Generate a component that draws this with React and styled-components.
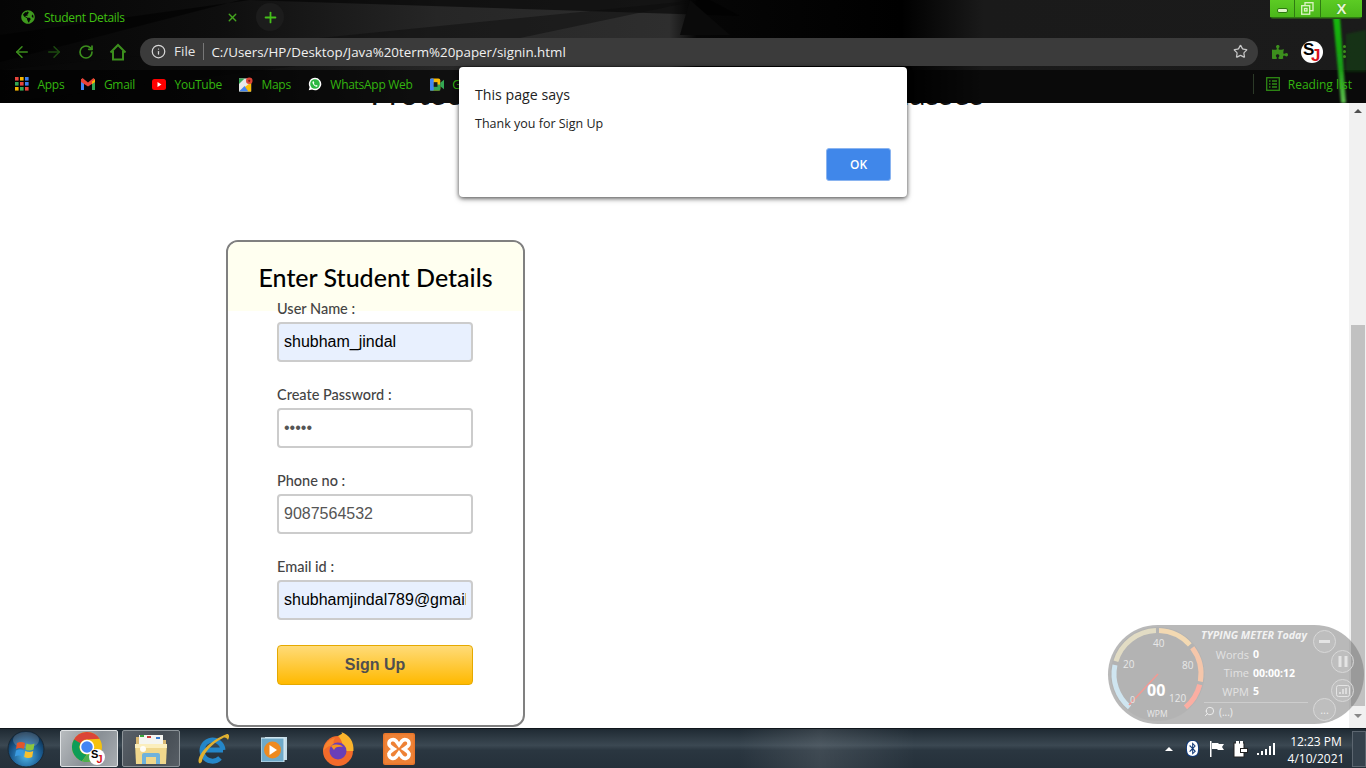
import React from 'react'
import styled, { createGlobalStyle } from 'styled-components'
import { ArrowLeft, ArrowRight, RotateCw, Info, Star, Plus, X, Search } from 'lucide-react'
import { FaGlobeAmericas, FaPuzzlePiece, FaBluetooth } from 'react-icons/fa'

const Global = createGlobalStyle`
  html, body { margin: 0; padding: 0; overflow: hidden; background: #fff; }
  * { box-sizing: border-box; }
`

const uiFont = `"Open Sans", "Noto Sans", sans-serif`
const pageFont = `Lato, "Noto Sans", sans-serif`

/* small drawings */
const HomeIcon = () => (
  <svg width="18" height="18" viewBox="0 0 18 18" fill="none" stroke="#3c8f1d" strokeWidth="2">
    <path d="M1.5 9.5 9 2l7.500 7.500M4 8v8.500h10V8" />
  </svg>
)

const AppsIcon = () => (
  <svg width="14" height="14" viewBox="0 0 14 14">
    {['#e8453c', '#f4b400', '#3d7ff0', '#34a853', '#e8453c', '#3d7ff0', '#f4b400', '#34a853', '#e8453c'].map((c, i) => (
      <rect key={i} x={(i % 3) * 5} y={Math.floor(i / 3) * 5} width="3.600" height="3.600" fill={c} />
    ))}
  </svg>
)

const GmailIcon = () => (
  <svg width="14" height="12" viewBox="0 0 14 12">
    <rect x="0" y="1" width="3" height="11" fill="#4285f4" />
    <rect x="11" y="1" width="3" height="11" fill="#34a853" />
    <path d="M0 1.500 1.500 0 7 4.500 12.500 0 14 1.500V4L7 8.500 0 4Z" fill="#ea4335" />
    <path d="M11 3.500 14 1.500V4L11 6Z" fill="#fbbc04" />
  </svg>
)

const YoutubeIcon = () => (
  <svg width="14" height="11" viewBox="0 0 14 11">
    <rect width="14" height="11" rx="2.500" fill="#f00" />
    <path d="M5.500 3 9.500 5.500 5.500 8Z" fill="#fff" />
  </svg>
)

const MapsIcon = () => (
  <svg width="15" height="15" viewBox="0 0 15 15">
    <rect y="1" width="13" height="14" fill="#e8e8e8" />
    <path d="M0 15 13 5v10Z" fill="#fbbc04" />
    <path d="M0 1h6L0 7Z" fill="#34a853" />
    <path d="M0 15 6 9l4 6Z" fill="#4285f4" />
    <circle cx="11" cy="3.500" r="3.500" fill="#db4437" />
    <circle cx="11" cy="3.500" r="1.200" fill="#7c1d16" />
  </svg>
)

const WhatsappIcon = () => (
  <svg width="18" height="18" viewBox="0 0 18 18">
    <path d="M9 1a8 8 0 1 1-3.800 15L1 17l1.100-4A8 8 0 0 1 9 1Z" fill="#fff" />
    <circle cx="9" cy="9" r="6.200" fill="#2bb741" />
    <path d="M6.500 5.500c-1 .8-1 2 0 3.600 1 1.700 2.300 2.900 4 3.300 1 .2 1.800-.3 2-1.200l-1.800-1-.8.800c-1-.4-2-1.500-2.400-2.500l.7-.8-.9-2.200Z" fill="#fff" />
  </svg>
)

const MeetIcon = () => (
  <svg width="15" height="13" viewBox="0 0 15 13">
    <rect width="11" height="13" rx="2" fill="#fbbc04" />
    <rect y="6.500" width="11" height="6.500" rx="1" fill="#34a853" />
    <rect width="4" height="13" rx="1" fill="#4285f4" />
    <rect x="4" y="4" width="4" height="5" fill="#1c1c1c" />
    <path d="M11 4.500 15 1.500v10L11 8.500Z" fill="#34a853" />
  </svg>
)

const ReadingIcon = () => (
  <svg width="14" height="14" viewBox="0 0 14 14" fill="none" stroke="#2f8a14" strokeWidth="1.300">
    <rect x="0.700" y="0.700" width="12.600" height="12.600" />
    <path d="M3 4h1.500M6 4h5M3 7h1.500M6 7h5M3 10h1.500M6 10h5" />
  </svg>
)

const SjBadge = ({ size }) => (
  <svg width={size} height={size} viewBox="0 0 22 22">
    <circle cx="11" cy="11" r="11" fill="#fff" />
    <text x="2" y="14" fontFamily="Liberation Sans" fontWeight="700" fontSize="17" fill="#000">S</text>
    <text x="10" y="20" fontFamily="Liberation Sans" fontWeight="700" fontSize="17" fill="#d8161c">J</text>
  </svg>
)

const WindowsOrb = () => (
  <svg width="38" height="38" viewBox="0 0 38 38">
    <defs>
      <radialGradient id="orb" cx="50%" cy="70%" r="65%">
        <stop offset="0" stopColor="#4fb4e6" />
        <stop offset="0.6" stopColor="#1c5f96" />
        <stop offset="1" stopColor="#0b2c4a" />
      </radialGradient>
    </defs>
    <circle cx="19" cy="19" r="18" fill="url(#orb)" stroke="#1b2833" />
    <ellipse cx="19" cy="10" rx="13" ry="8" fill="#fff" opacity="0.18" />
    <path d="M10 13q4-2 8 0l-1 6q-4-2-8 0Z" fill="#e2562b" />
    <path d="M19.500 13.500q4 2 8 0l-1 6q-4 2-8 0Z" fill="#8cc63e" />
    <path d="M9 20.500q4-2 7.800 0l-1 6q-4-2-8 0Z" fill="#3a9ae0" />
    <path d="M18.200 21q4 2 8 0l-1 6q-4 2-8 0Z" fill="#f8c02d" />
  </svg>
)

const ChromeIcon = () => (
  <svg width="36" height="36" viewBox="0 0 36 36">
    <circle cx="16" cy="16" r="15" fill="#f4c20d" />
    <path d="M16 1A15 15 0 0 1 29 8.500H16a7.500 7.500 0 0 0-6.500 3.750L3 8.500A15 15 0 0 1 16 1Z" fill="#db4437" transform="rotate(-3 16 16)" />
    <path d="M3 8.500A15 15 0 0 0 11 30.200L16 23.500a7.500 7.500 0 0 1-6.500-11.250Z" fill="#0f9d58" />
    <path d="M11 30.200 16 23.500a7.500 7.500 0 0 0 6.500-4L29 23.500A15 15 0 0 1 11 30.200Z" fill="#4caf50" />
    <circle cx="16" cy="16" r="6.500" fill="#4285f4" stroke="#fff" strokeWidth="1.500" />
    <circle cx="26" cy="26" r="8" fill="#fff" />
    <text x="20" y="27" fontFamily="Liberation Sans" fontWeight="700" fontSize="11" fill="#000">S</text>
    <text x="25.500" y="32" fontFamily="Liberation Sans" fontWeight="700" fontSize="11" fill="#d8161c">J</text>
  </svg>
)

const FolderIcon = () => (
  <svg width="34" height="34" viewBox="0 0 34 34">
    <path d="M2 5h10l2 3h18v6H2Z" fill="#d9b871" />
    <rect x="5" y="3" width="24" height="9" fill="#f5f5f0" />
    <rect x="6" y="3" width="4" height="2" fill="#3ba53b" />
    <rect x="13" y="4" width="4" height="2" fill="#cc3b3b" />
    <rect x="22" y="5" width="4" height="2" fill="#3b7fd0" />
    <path d="M1 12h32l-1 20H2Z" fill="#f0d78c" />
    <path d="M1 12h32v4H1Z" fill="#fbeebd" />
    <path d="M8 32v-9q0-2 2-2h14q2 0 2 2v9h-4v-7H12v7Z" fill="#6fb2dc" />
    <circle cx="9" cy="17" r="3" fill="#fff" opacity="0.9" />
  </svg>
)

const IeIcon = () => (
  <svg width="34" height="34" viewBox="0 0 34 34">
    <path d="M27 18H8M27 18A10.500 10.500 0 1 0 24 26" fill="none" stroke="#2486c8" strokeWidth="5" />
    <path d="M3 31C0 24 14 8 31 2c2 0 3 2 1 6-1-2-3-3-5-2C16 11 7 22 6 29c0 1-2 3-3 2Z" fill="#e0b030" />
  </svg>
)

const WmpIcon = () => (
  <svg width="26" height="26" viewBox="0 0 26 26">
    <rect x="4" y="1" width="22" height="23" fill="#c5dce8" />
    <rect x="0" y="2" width="23" height="24" fill="#6faac9" stroke="#d9ebf4" />
    <circle cx="11.500" cy="14" r="8.500" fill="#ee8a1f" />
    <path d="M8.500 9 16 14l-7.500 5Z" fill="#fff" />
  </svg>
)

const FirefoxIcon = () => (
  <svg width="32" height="34" viewBox="0 0 32 34">
    <circle cx="16" cy="19" r="15" fill="#f36a2a" />
    <path d="M16 4C22 1 20 1 19 0c9 3 13 10 12.500 19H20C22 14 20 8 16 4Z" fill="#fbb42c" />
    <path d="M1 19C3 10 8 7 13 6c-2 3-2 6 0 7-5 0-9 2-12 6Z" fill="#f9852e" />
    <circle cx="16" cy="19" r="8.500" fill="#6a3fb8" />
    <path d="M9 14c4-2 9-2 12 1-5-1-8 0-9 3Z" fill="#f7931e" />
  </svg>
)

const XamppIcon = () => (
  <svg width="32" height="32" viewBox="0 0 32 32">
    <rect width="32" height="32" rx="2" fill="#e8762b" />
    <rect x="1.500" y="1.500" width="29" height="29" rx="1" fill="#ee8236" />
    <path d="M6 11a4 4 0 0 1 7-3l3 4 3-4a4 4 0 0 1 7 3c0 2-2 3-5 5 3 2 5 3 5 5a4 4 0 0 1-7 3l-3-4-3 4a4 4 0 0 1-7-3c0-2 2-3 5-5-3-2-5-3-5-5Z" fill="none" stroke="#fff" strokeWidth="3.600" />
  </svg>
)

const ThemeArt = () => (
  <ArtLayer viewBox="0 0 1366 103" preserveAspectRatio="none">
    <defs>
      <linearGradient id="base" x1="0" x2="1" y1="0" y2="0">
        <stop offset="0" stopColor="#050505" />
        <stop offset="0.16" stopColor="#0e0e0e" />
        <stop offset="0.32" stopColor="#262626" />
        <stop offset="0.49" stopColor="#2e2e2e" />
        <stop offset="0.51" stopColor="#060606" />
        <stop offset="0.66" stopColor="#000" />
        <stop offset="0.72" stopColor="#1a1a1a" />
        <stop offset="1" stopColor="#1b1b1b" />
      </linearGradient>
      <linearGradient id="glow" x1="0" x2="0" y1="0" y2="1">
        <stop offset="0" stopColor="#14b80c" />
        <stop offset="0.6" stopColor="#1a9c14" />
        <stop offset="1" stopColor="#5fbf50" />
      </linearGradient>
      <filter id="soft"><feGaussianBlur stdDeviation="1" /></filter>
    </defs>
    <rect width="1366" height="103" fill="url(#base)" />
    <path d="M0 62 240 0h470l30 16L250 0 0 35Z" fill="#000" opacity="0.55" />
    <path d="M0 70 700 0 520 38 0 103Z" fill="#0a0a0a" opacity="0.45" />
    <path d="M690 0 730 35 680 35Z" fill="#0a0a0a" />
    <path d="M0 70H1366V103H0Z" fill="#000" opacity="0.6" />
    <path d="M1346 34l20-4v42h-20Z" fill="#0f5f0a" opacity="0.35" filter="url(#soft)" />
    <path d="M1333 17h7l6 86h-5Z" fill="url(#glow)" filter="url(#soft)" />
  </ArtLayer>
)

const gaugePoint = (deg, r) => {
  const a = (deg * Math.PI) / 180
  return [49.5 + r * Math.cos(a), 49 + r * Math.sin(a)]
}

const gaugeArc = (from, to, r) => {
  const [x1, y1] = gaugePoint(from, r)
  const [x2, y2] = gaugePoint(to, r)
  return `M${x1} ${y1}A${r} ${r} 0 0 1 ${x2} ${y2}`
}

const GaugeDial = () => (
  <svg width="104" height="99" viewBox="0 0 104 99">
    <circle cx="49.500" cy="49" r="47" fill="#a9a9a9" opacity="0.35" />
    <path d={gaugeArc(130, 192, 43.500)} fill="none" stroke="#cfe5f0" strokeWidth="5" />
    <path d={gaugeArc(197, 268, 43.500)} fill="none" stroke="#e2dcc4" strokeWidth="5" />
    <path d={gaugeArc(272, 318, 43.500)} fill="none" stroke="#f3d9b2" strokeWidth="5" />
    <path d={gaugeArc(323, 10, 43.500)} fill="none" stroke="#f5c6aa" strokeWidth="5" />
    <path d={gaugeArc(14, 50, 43.500)} fill="none" stroke="#fbaea2" strokeWidth="5" />
    <path d="M21 80 50 49" stroke="#f29a93" strokeWidth="1.600" />
    <g fontFamily="Open Sans" fontSize="10" fill="#e8e8e8">
      <text x="15" y="43">20</text>
      <text x="45" y="22">40</text>
      <text x="74" y="44">80</text>
      <text x="22" y="78" fontSize="9">0</text>
      <text x="61" y="77">120</text>
      <text x="39" y="92" fontSize="8.500">WPM</text>
    </g>
    <text x="39" y="71" fontFamily="Open Sans" fontSize="16" fontWeight="700" fill="#fff">00</text>
  </svg>
)

/* data */
const bookmarks = [
  { name: 'Apps', icon: <AppsIcon /> },
  { name: 'Gmail', icon: <GmailIcon /> },
  { name: 'YouTube', icon: <YoutubeIcon /> },
  { name: 'Maps', icon: <MapsIcon /> },
  { name: 'WhatsApp Web', icon: <WhatsappIcon /> },
]

const fields = [
  { label: 'User Name :', value: 'shubham_jindal', filled: true, type: 'text' },
  { label: 'Create Password :', value: 'abcde', type: 'password' },
  { label: 'Phone no :', value: '9087564532', type: 'text' },
  { label: 'Email id :', value: 'shubhamjindal789@gmail.com', filled: true, type: 'text' },
]

const meterRows = [
  { label: 'Words', value: '0' },
  { label: 'Time', value: '00:00:12' },
  { label: 'WPM', value: '5' },
]

const App = () => {
  return (
    <Screen>
      <Global />
      <BrowserTop>
        <ThemeArt />
        <TabStrip>
          <Tab>
            <FaGlobeAmericas size={14} color="#3f9a1e" />
            <TabTitle>Student Details</TabTitle>
            <X size={13} color="#45a51f" strokeWidth={2.500} />
          </Tab>
          <NewTab><Plus size={17} color="#45c01a" strokeWidth={2.500} /></NewTab>
          <WindowControls>
            <WinButton $w={24}><MinGlyph /></WinButton>
            <WinButton $w={25}>
              <svg width="13" height="13" viewBox="0 0 13 13" fill="none" stroke="#dff5c8" strokeWidth="1.300">
                <rect x="4" y="0.700" width="8" height="8" />
                <rect x="0.700" y="3.700" width="8" height="8.500" fill="#52c41f" />
                <rect x="3.500" y="6.500" width="2.500" height="2.500" />
              </svg>
            </WinButton>
            <WinButton $w={41}><CloseGlyph>X</CloseGlyph></WinButton>
          </WindowControls>
        </TabStrip>
        <Toolbar>
          <NavButton><ArrowLeft size={18} color="#3c8f1d" /></NavButton>
          <NavButton><ArrowRight size={18} color="#1d4a10" /></NavButton>
          <NavButton><RotateCw size={16} color="#3c8f1d" strokeWidth={2.500} /></NavButton>
          <NavButton><HomeIcon /></NavButton>
          <Omnibox>
            <Info size={15} color="#d8d8d8" />
            <FileTag>File</FileTag>
            <UrlText>C:/Users/HP/Desktop/Java%20term%20paper/signin.html</UrlText>
            <Star size={15} color="#c8c8c8" strokeWidth={2} />
          </Omnibox>
          <ToolbarRight>
            <NavButton><FaPuzzlePiece size={16} color="#3c8f1d" /></NavButton>
            <NavButton><SjBadge size={22} /></NavButton>
            <NavButton><MenuDots /></NavButton>
          </ToolbarRight>
        </Toolbar>
        <BookmarkBar>
          {bookmarks.map((b) => (
            <Bookmark key={b.name}>
              <BookmarkIcon>{b.icon}</BookmarkIcon>
              <span>{b.name}</span>
            </Bookmark>
          ))}
          <Bookmark>
            <BookmarkIcon><MeetIcon /></BookmarkIcon>
            <LongBookmark>Google Meet - Online Video Meetings For Classes And Groups And Everything Else That You Need</LongBookmark>
          </Bookmark>
          <ReadingList>
            <ReadingIcon />
            <span>Reading list</span>
          </ReadingList>
        </BookmarkBar>
      </BrowserTop>

      <Viewport>
        <Page>
          <PageTitle>Protected Portal For Online Student Classes</PageTitle>
          <Card>
            <CardHead>Enter Student Details</CardHead>
            <Form>
              {fields.map((f) => (
                <Field key={f.label}>
                  <FieldLabel>{f.label}</FieldLabel>
                  <TextInput type={f.type} value={f.value} $filled={f.filled} readOnly />
                </Field>
              ))}
              <SignUp type="button">Sign Up</SignUp>
            </Form>
          </Card>
        </Page>
        <Scrollbar>
          <ScrollArrow />
          <ScrollThumb />
          <ScrollArrow $down />
        </Scrollbar>
      </Viewport>

      <Taskbar>
        <StartOrb><WindowsOrb /></StartOrb>
        <TaskButton $active><ChromeIcon /></TaskButton>
        <TaskButton $open><FolderIcon /></TaskButton>
        <TaskButton><IeIcon /></TaskButton>
        <TaskButton $w={56} $ml={4}><WmpIcon /></TaskButton>
        <TaskButton $w={72}><FirefoxIcon /></TaskButton>
        <TaskButton $w={50}><XamppIcon /></TaskButton>
        <Tray>
          <TrayCaret />
          <BluetoothBadge><FaBluetooth size={15} color="#fff" /></BluetoothBadge>
          <svg width="16" height="16" viewBox="0 0 16 16" fill="#fff">
            <rect x="1" y="0" width="1.500" height="16" />
            <path d="M3 2h6l1 1h5l-2 3 2 3H9L8 8H3Z" />
          </svg>
          <svg width="16" height="18" viewBox="0 0 16 18">
            <rect x="1" y="3" width="10" height="14" fill="#fff" stroke="#222" />
            <path d="M3 1h3v4H3ZM7 1h3v4H7Z" fill="#fff" />
            <path d="M7 8h8v5H7Z" fill="#222" />
            <rect x="8" y="9" width="6" height="3" fill="#fff" />
          </svg>
          <svg width="18" height="12" viewBox="0 0 18 12" fill="#fff">
            <rect x="0" y="10" width="2" height="2" />
            <rect x="4" y="8" width="2" height="4" />
            <rect x="8" y="6" width="2" height="6" />
            <rect x="12" y="3" width="2" height="9" />
            <rect x="16" y="0" width="2" height="12" />
          </svg>
          <Clock>
            <span>12:23 PM</span>
            <span>4/10/2021</span>
          </Clock>
          <ShowDesktop />
        </Tray>
      </Taskbar>

      <Dialog>
        <DialogTitle>This page says</DialogTitle>
        <DialogText>Thank you for Sign Up</DialogText>
        <DialogActions>
          <OkButton type="button">OK</OkButton>
        </DialogActions>
      </Dialog>

      <Meter>
        <GaugeDial />
        <MeterInfo>
          <MeterTitle>TYPING METER Today</MeterTitle>
          {meterRows.map((r) => (
            <MeterRow key={r.label}>
              <MeterLabel>{r.label}</MeterLabel>
              <MeterValue>{r.value}</MeterValue>
            </MeterRow>
          ))}
          <MeterSearch>
            <FlippedSearch size={11} color="#f0f0f0" />
            <span>(...)</span>
          </MeterSearch>
        </MeterInfo>
        <MeterButton $x={205} $y={5}><MeterMinus /></MeterButton>
        <MeterButton $x={223} $y={25}>
          <svg width="10" height="11" viewBox="0 0 10 11" fill="#e4e4e4">
            <rect x="0.500" width="3" height="11" />
            <rect x="6.500" width="3" height="11" />
          </svg>
        </MeterButton>
        <MeterButton $x={223} $y={54}>
          <svg width="14" height="12" viewBox="0 0 14 12" fill="none" stroke="#e4e4e4">
            <rect x="0.500" y="0.500" width="13" height="11" rx="2" />
            <path d="M4 9V7M7 9V4M10 9V3" strokeWidth="1.600" />
          </svg>
        </MeterButton>
        <MeterButton $x={205} $y={73}>...</MeterButton>
      </Meter>
    </Screen>
  )
}

export default App

const Screen = styled.div`
  position: relative;
  width: 1366px;
  height: 768px;
  display: flex;
  flex-direction: column;
  overflow: hidden;
  font-family: ${uiFont};
`

const BrowserTop = styled.header`
  position: relative;
  z-index: 2;
  height: 103px;
  flex: none;
  background: #0a0a0a;
`

const ArtLayer = styled.svg`
  position: absolute;
  inset: 0;
  width: 100%;
  height: 100%;
`

const TabStrip = styled.div`
  position: relative;
  height: 34px;
  display: flex;
  align-items: flex-start;
`

const Tab = styled.div`
  width: 240px;
  height: 34px;
  margin-left: 21px;
  padding-right: 22px;
  display: flex;
  align-items: center;
  gap: 9px;
  svg { flex: none; }
`

const TabTitle = styled.span`
  flex: 1;
  font-size: 12px;
  letter-spacing: -0.3px;
  color: #3fc010;
`

const NewTab = styled.div`
  width: 28px;
  height: 28px;
  margin: 3px 0 0 -5px;
  border-radius: 50%;
  background: #1c1c1c;
  display: flex;
  align-items: center;
  justify-content: center;
`

const WindowControls = styled.div`
  margin-left: auto;
  margin-right: 4px;
  height: 18px;
  display: flex;
  gap: 1px;
  background: #2f7a12;
  border-radius: 0 0 3px 3px;
  box-shadow: 0 1px 0 #2a4a1a;
`

const WinButton = styled.div`
  width: ${(p) => p.$w}px;
  height: 17px;
  background: linear-gradient(#5ccb24, #4bb81a);
  display: flex;
  align-items: center;
  justify-content: center;
`

const MinGlyph = styled.div`
  width: 11px;
  height: 5px;
  margin-top: 3px;
  background: #dff5c8;
  border: 1px solid #2e7a10;
  border-radius: 2px;
`

const CloseGlyph = styled.span`
  font: 700 15px/17px "Liberation Sans", sans-serif;
  color: #e4f7d2;
  text-shadow: 0 0 1px #2e7a10;
`

const Toolbar = styled.div`
  position: relative;
  height: 35px;
  padding-left: 6px;
  display: flex;
  align-items: center;
`

const NavButton = styled.div`
  width: 32px;
  height: 32px;
  flex: none;
  display: flex;
  align-items: center;
  justify-content: center;
`

const MenuDots = styled.div`
  width: 3px;
  height: 3px;
  border-radius: 50%;
  background: #3c8f1d;
  box-shadow: 0 -5px 0 #3c8f1d, 0 5px 0 #3c8f1d;
`

const Omnibox = styled.div`
  flex: 1;
  height: 28px;
  margin-left: 6px;
  padding: 0 10px 0 11px;
  border-radius: 14px;
  background: #3b3b3b;
  display: flex;
  align-items: center;
`

const FileTag = styled.span`
  margin-left: 8px;
  padding-right: 8px;
  border-right: 1px solid #777;
  font-size: 13.500px;
  line-height: 17px;
  color: #e4e4e4;
`

const UrlText = styled.span`
  flex: 1;
  margin-left: 7px;
  font-size: 13.350px;
  color: #f0f0f0;
`

const ToolbarRight = styled.div`
  margin-left: 6px;
  padding-right: 6px;
  display: flex;
`

const BookmarkBar = styled.div`
  position: relative;
  height: 34px;
  padding: 0 14px 4px 15px;
  display: flex;
  align-items: center;
  gap: 17px;
  font-size: 12px;
  letter-spacing: -0.28px;
  color: #33b50f;
`

const Bookmark = styled.div`
  display: flex;
  align-items: center;
  gap: 8.500px;
`

const BookmarkIcon = styled.span`
  width: 14px;
  display: flex;
  align-items: center;
  justify-content: center;
`

const LongBookmark = styled.span`
  width: 456px;
  white-space: nowrap;
  overflow: hidden;
  text-overflow: ellipsis;
`

const ReadingList = styled.div`
  margin-left: auto;
  padding-left: 12px;
  border-left: 1px solid #2c3a28;
  height: 20px;
  display: flex;
  align-items: center;
  gap: 8px;
  white-space: nowrap;
  letter-spacing: 0;
`

const Viewport = styled.main`
  flex: 1;
  min-height: 0;
  display: flex;
`

const Page = styled.div`
  flex: 1;
  min-width: 0;
  padding-left: 226px;
  background: #fff;
`

const PageTitle = styled.h1`
  margin: -30px 0 0 -221px;
  height: 40px;
  font: 400 32px/40px ${pageFont};
  text-align: center;
  white-space: nowrap;
  color: #111;
`

const Card = styled.section`
  width: 299px;
  margin-top: 127px;
  border: 2px solid #808080;
  border-radius: 12px;
  overflow: hidden;
  background: #fff;
`

const CardHead = styled.h2`
  margin: 0;
  height: 69px;
  padding-top: 20px;
  background: #fffff0;
  font: 500 25px/30px ${pageFont};
  text-align: center;
  color: #000;
`

const Form = styled.form`
  position: relative;
  margin-top: -12px;
  padding: 0 50px 40px 49px;
  display: flex;
  flex-direction: column;
`

const Field = styled.div`
  height: 86px;
  display: flex;
  flex-direction: column;
  gap: 3px;
`

const FieldLabel = styled.label`
  height: 20px;
  font: 500 14.500px/20px ${pageFont};
  color: #444;
`

const TextInput = styled.input`
  width: 196px;
  height: 40px;
  padding: 0 5px;
  border: 2px solid #ccc;
  border-radius: 4px;
  outline: none;
  background: ${(p) => (p.$filled ? '#e8f0fe' : '#fff')};
  font: 16px "Liberation Sans", Arial, sans-serif;
  color: ${(p) => (p.$filled ? '#000' : '#555')};
`

const SignUp = styled.button`
  width: 196px;
  height: 40px;
  margin-top: 2px;
  border: 1px solid #e5a900;
  border-radius: 4px;
  background: linear-gradient(#ffdb78, #ffb900);
  font: 700 16px "Liberation Sans", Arial, sans-serif;
  color: #4f4f4f;
`

const Scrollbar = styled.aside`
  width: 17px;
  flex: none;
  padding: 0 1px;
  background: #f1f1f1;
  display: flex;
  flex-direction: column;
  align-items: center;
`

const ScrollArrow = styled.div`
  width: 0;
  height: 0;
  margin: ${(p) => (p.$down ? '8px 0 0' : '6px 0 0')};
  border-left: 4px solid transparent;
  border-right: 4px solid transparent;
  ${(p) => (p.$down ? 'border-top: 4px solid #888;' : 'border-bottom: 4px solid #505050;')}
`

const ScrollThumb = styled.div`
  width: 14px;
  height: 381px;
  margin-top: 212px;
  background: #c1c1c1;
`

const Taskbar = styled.footer`
  position: relative;
  height: 40px;
  flex: none;
  padding-left: 5px;
  display: flex;
  align-items: center;
  border-top: 1px solid #10161c;
  background:
    linear-gradient(90deg, transparent 54%, rgba(255, 255, 255, 0.1) 60%, transparent 67%),
    linear-gradient(#1f2a33, #3b4852 42%, #2a3640 55%, #25303a);
`

const StartOrb = styled.div`
  width: 42px;
  margin-right: 13px;
  display: flex;
  justify-content: center;
`

const TaskButton = styled.div`
  width: ${(p) => p.$w || 58}px;
  height: 37px;
  margin-left: ${(p) => p.$ml || 0}px;
  margin-right: ${(p) => (p.$active || p.$open ? 4 : 0)}px;
  border-radius: 2px;
  display: flex;
  align-items: center;
  justify-content: center;
  ${(p) => p.$active && `
    background: linear-gradient(120deg, #b8bcbf, #8a9096 55%, #a8adb1);
    border: 1px solid #dfe2e4;
  `}
  ${(p) => p.$open && `
    background: linear-gradient(120deg, #596068, #454c53 55%, #575e65);
    border: 1px solid #8d9499;
  `}
`

const Tray = styled.div`
  margin-left: auto;
  height: 100%;
  display: flex;
  align-items: center;
  gap: 8px;
`

const TrayCaret = styled.div`
  width: 0;
  height: 0;
  border-left: 4px solid transparent;
  border-right: 4px solid transparent;
  border-bottom: 4px solid #fff;
  margin-right: 5px;
`

const BluetoothBadge = styled.div`
  width: 13px;
  height: 17px;
  margin-right: 2px;
  border-radius: 6px;
  background: #123a78;
  display: flex;
  align-items: center;
  justify-content: center;
`

const Clock = styled.div`
  width: 72px;
  margin: 3px -8px 0 -3px;
  display: flex;
  flex-direction: column;
  align-items: center;
  font-size: 12px;
  line-height: 17px;
  color: #fff;
`

const ShowDesktop = styled.div`
  width: 14px;
  height: 36px;
  border: 1px solid #5c6670;
  background: #35414c;
`

const Dialog = styled.div`
  position: absolute;
  z-index: 5;
  top: 67px;
  left: 459px;
  width: 448px;
  height: 130px;
  padding: 18px 16px 16px;
  border-radius: 4px;
  background: #fff;
  box-shadow: 0 1px 4px rgba(0, 0, 0, 0.6), 0 2px 6px rgba(0, 0, 0, 0.25);
  display: flex;
  flex-direction: column;
`

const DialogTitle = styled.div`
  font-size: 14.200px;
  line-height: 20px;
  color: #222;
`

const DialogText = styled.div`
  margin-top: 11px;
  font-size: 12.500px;
  line-height: 16px;
  color: #222;
`

const DialogActions = styled.div`
  margin-top: auto;
  display: flex;
  justify-content: flex-end;
`

const OkButton = styled.button`
  width: 65px;
  height: 33px;
  border: 1px solid #8ab4f0;
  border-radius: 3px;
  background: #4087ea;
  font: 600 12px ${uiFont};
  color: #fff;
`

const Meter = styled.div`
  position: absolute;
  z-index: 4;
  top: 625px;
  left: 1108px;
  width: 256px;
  height: 99px;
  border-radius: 50px;
  background: rgba(115, 115, 115, 0.5);
  display: flex;
`

const MeterInfo = styled.div`
  margin-left: -16px;
  padding-top: 3px;
  width: 116px;
  display: flex;
  flex-direction: column;
`

const MeterTitle = styled.div`
  margin-left: 5px;
  height: 17px;
  font: italic 700 10.700px/15px ${uiFont};
  white-space: nowrap;
  color: #f2f2f2;
`

const MeterRow = styled.div`
  height: 18.500px;
  display: flex;
  align-items: center;
  gap: 4px;
  font-size: 11px;
`

const MeterLabel = styled.span`
  width: 53px;
  text-align: right;
  color: #e2e2e2;
`

const MeterValue = styled.span`
  font-weight: 700;
  font-size: 10.500px;
  color: #fff;
`

const MeterSearch = styled.div`
  margin: 1px 0 0 8px;
  padding-top: 2px;
  width: 104px;
  border-top: 1px solid #cdcdcd;
  display: flex;
  align-items: center;
  gap: 4px;
  font-size: 10px;
  color: #eee;
`

const FlippedSearch = styled(Search)`
  transform: scaleX(-1);
`

const MeterButton = styled.div`
  position: absolute;
  left: ${(p) => p.$x}px;
  top: ${(p) => p.$y}px;
  width: 23px;
  height: 23px;
  border: 1px solid #d8d8d8;
  border-radius: 50%;
  background: rgba(255, 255, 255, 0.08);
  display: flex;
  align-items: center;
  justify-content: center;
  font-size: 11px;
  line-height: 14px;
  color: #eee;
`

const MeterMinus = styled.div`
  width: 11px;
  height: 3px;
  background: #e4e4e4;
`
